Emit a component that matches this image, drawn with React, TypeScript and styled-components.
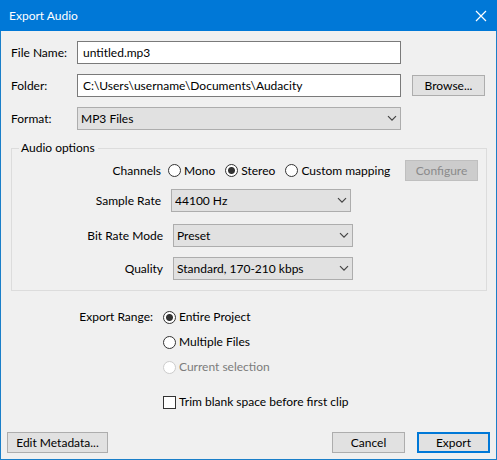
import React, { useId, useState } from "react";
import styled, { createGlobalStyle, css } from "styled-components";

const GlobalStyle = createGlobalStyle`
  *, *::before, *::after { box-sizing: border-box; }
  body {
    margin: 0;
    background: #f0f0f0;
    color: #000;
    font: 12px/18px Lato, "Noto Sans", sans-serif;
  }
  button, input, select { font: inherit; color: inherit; }
`;

const Dialog = styled.form`
  display: flex;
  flex-direction: column;
  min-height: 100vh;
  border: 1px solid #1a7fc9;
  border-top: 0;
  background: #f0f0f0;
`;

const TitleBar = styled.header`
  display: flex;
  align-items: center;
  justify-content: space-between;
  height: 31px;
  margin: 0 -1px;
  padding: 0 9px;
  background: #0078d7;
  color: #fff;
`;

const Title = styled.h1`
  margin: 0;
  font-size: 12px;
  font-weight: 400;
`;

const CloseButton = styled.button`
  display: flex;
  padding: 0;
  border: 0;
  background: none;
`;

const Destination = styled.div`
  display: grid;
  grid-template-columns: 66px minmax(0, 1fr) 84px;
  row-gap: 10px;
  align-items: center;
  padding: 10px 11px 0 10px;
`;

const FieldLabel = styled.label`
  white-space: nowrap;
`;

const TextField = styled.input`
  width: 100%;
  height: 23px;
  padding: 0 5px;
  border: 1px solid #7a7a7a;
  border-radius: 0;
  background: #fff;
  outline: 0;
`;

const SelectFrame = styled.div<{ $width?: number }>`
  display: grid;
  align-items: center;
  width: ${(p) => (p.$width ? `${p.$width}px` : "100%")};

  > * { grid-area: 1 / 1; }
  > svg { justify-self: end; margin-right: 4px; pointer-events: none; }
`;

const NativeSelect = styled.select`
  appearance: none;
  width: 100%;
  height: 23px;
  padding: 0 20px 0 3px;
  border: 1px solid #adadad;
  border-radius: 0;
  background: #e1e1e1;
`;

const PushButton = styled.button<{ $primary?: boolean; $wide?: boolean }>`
  width: ${(p) => (p.$wide ? 101 : 73)}px;
  height: 21px;
  padding: 0;
  border: ${(p) => (p.$primary ? "2px solid #0078d7" : "1px solid #adadad")};
  background: #e1e1e1;
  line-height: 16px;
  white-space: nowrap;

  &:disabled {
    border-color: #bfbfbf;
    background: #cccccc;
    color: #8a8a8a;
  }
`;

const BrowseButton = styled(PushButton)`
  justify-self: end;
`;

const Group = styled.fieldset`
  min-width: 0;
  margin: 9px 9px 0 10px;
  padding: 3px 8px 10px 7px;
  border: 1px solid #dcdcdc;
`;

const Legend = styled.legend`
  padding: 0 3px 0 2px;
`;

const OptionRow = styled.div<{ $top?: number; $label: number; $gap?: number }>`
  display: grid;
  grid-template-columns: ${(p) => p.$label}px minmax(0, 1fr);
  column-gap: ${(p) => p.$gap ?? 10}px;
  align-items: center;
  margin-top: ${(p) => p.$top ?? 0}px;
`;

const OptionLabel = styled.label`
  text-align: right;
`;

const ChannelChoices = styled.div`
  display: flex;
  align-items: center;
  gap: 10px;

  > button { margin-left: auto; }
`;

const Choice = styled.label<{ $disabled?: boolean }>`
  display: flex;
  align-items: center;
  gap: 3px;
  white-space: nowrap;
  color: ${(p) => (p.$disabled ? "#7c7c7c" : "inherit")};
`;

const mark = css`
  appearance: none;
  flex: none;
  width: 13px;
  height: 13px;
  margin: 0;
  border: 1px solid #333;
  background: #fff;
  &:disabled { border-color: #ccc; }
`;

const Radio = styled.input.attrs({ type: "radio" })`
  ${mark}
  border-radius: 50%;
  &:checked { background: radial-gradient(circle, #333 3px, #fff 4px); }
`;

const CheckBox = styled.input.attrs({ type: "checkbox" })`
  ${mark}
  &:checked { background: #333; box-shadow: inset 0 0 0 2px #fff; }
`;

const RangeSection = styled.div`
  display: grid;
  grid-template-columns: 152px minmax(0, 1fr);
  column-gap: 10px;
  padding-top: 17px;
`;

const RangeChoices = styled.div`
  display: flex;
  flex-direction: column;
  align-items: flex-start;
  gap: 7px;
`;

const TrimChoice = styled(Choice)`
  margin-top: 10px;
`;

const Footer = styled.footer`
  display: flex;
  gap: 12px;
  margin-top: auto;
  padding: 0 6px 6px;

  > :first-child { margin-right: auto; }
`;

function Chevron() {
  return (
    <svg width="10" height="7" viewBox="0 0 10 7" fill="none" stroke="#444" strokeWidth="1.2" aria-hidden="true">
      <path d="M1 1.2 5 5.2 9 1.2" />
    </svg>
  );
}

interface DropDownProps {
  id: string;
  options: string[];
  width?: number;
}

function DropDown({ id, options, width }: DropDownProps) {
  return (
    <SelectFrame $width={width}>
      <NativeSelect id={id} defaultValue={options[0]}>
        {options.map((o) => (
          <option key={o}>{o}</option>
        ))}
      </NativeSelect>
      <Chevron />
    </SelectFrame>
  );
}

export default function App() {
  const id = useId();
  const [channels, setChannels] = useState("Stereo");
  const [range, setRange] = useState("Entire Project");

  return (
    <>
      <GlobalStyle />
      <Dialog onSubmit={(e) => e.preventDefault()}>
        <TitleBar>
          <Title>Export Audio</Title>
          <CloseButton type="button" aria-label="Close">
            <svg width="14" height="12" viewBox="0 0 14 12" stroke="#fff" strokeWidth="1.2" aria-hidden="true">
              <path d="M2 1 12 11M12 1 2 11" />
            </svg>
          </CloseButton>
        </TitleBar>

        <Destination>
          <FieldLabel htmlFor={`${id}-name`}>File Name:</FieldLabel>
          <TextField id={`${id}-name`} defaultValue="untitled.mp3" />
          <span />
          <FieldLabel htmlFor={`${id}-folder`}>Folder:</FieldLabel>
          <TextField id={`${id}-folder`} defaultValue={"C:\\Users\\username\\Documents\\Audacity"} />
          <BrowseButton type="button">Browse...</BrowseButton>
          <FieldLabel htmlFor={`${id}-format`}>Format:</FieldLabel>
          <DropDown id={`${id}-format`} options={["MP3 Files"]} />
        </Destination>

        <Group>
          <Legend>Audio options</Legend>
          <OptionRow $label={142} $gap={7} role="radiogroup" aria-labelledby={`${id}-channels`}>
            <OptionLabel as="span" id={`${id}-channels`}>Channels</OptionLabel>
            <ChannelChoices>
              {["Mono", "Stereo", "Custom mapping"].map((name) => (
                <Choice key={name}>
                  <Radio name="channels" checked={channels === name} onChange={() => setChannels(name)} />
                  {name}
                </Choice>
              ))}
              <PushButton type="button" disabled={channels !== "Custom mapping"}>Configure</PushButton>
            </ChannelChoices>
          </OptionRow>
          <OptionRow $label={142} $top={8}>
            <OptionLabel htmlFor={`${id}-rate`}>Sample Rate</OptionLabel>
            <DropDown id={`${id}-rate`} width={180} options={["44100 Hz"]} />
          </OptionRow>
          <OptionRow $label={144} $top={12}>
            <OptionLabel htmlFor={`${id}-mode`}>Bit Rate Mode</OptionLabel>
            <DropDown id={`${id}-mode`} width={180} options={["Preset"]} />
          </OptionRow>
          <OptionRow $label={144} $top={10}>
            <OptionLabel htmlFor={`${id}-quality`}>Quality</OptionLabel>
            <DropDown id={`${id}-quality`} width={180} options={["Standard, 170-210 kbps"]} />
          </OptionRow>
        </Group>

        <RangeSection role="radiogroup" aria-labelledby={`${id}-range`}>
          <OptionLabel as="span" id={`${id}-range`}>Export Range:</OptionLabel>
          <RangeChoices>
            {["Entire Project", "Multiple Files", "Current selection"].map((name) => (
              <Choice key={name} $disabled={name === "Current selection"}>
                <Radio
                  name="range"
                  checked={range === name}
                  disabled={name === "Current selection"}
                  onChange={() => setRange(name)}
                />
                {name}
              </Choice>
            ))}
            <TrimChoice>
              <CheckBox />
              Trim blank space before first clip
            </TrimChoice>
          </RangeChoices>
        </RangeSection>

        <Footer>
          <PushButton type="button" $wide>Edit Metadata...</PushButton>
          <PushButton type="button">Cancel</PushButton>
          <PushButton type="submit" $primary>Export</PushButton>
        </Footer>
      </Dialog>
    </>
  );
}
